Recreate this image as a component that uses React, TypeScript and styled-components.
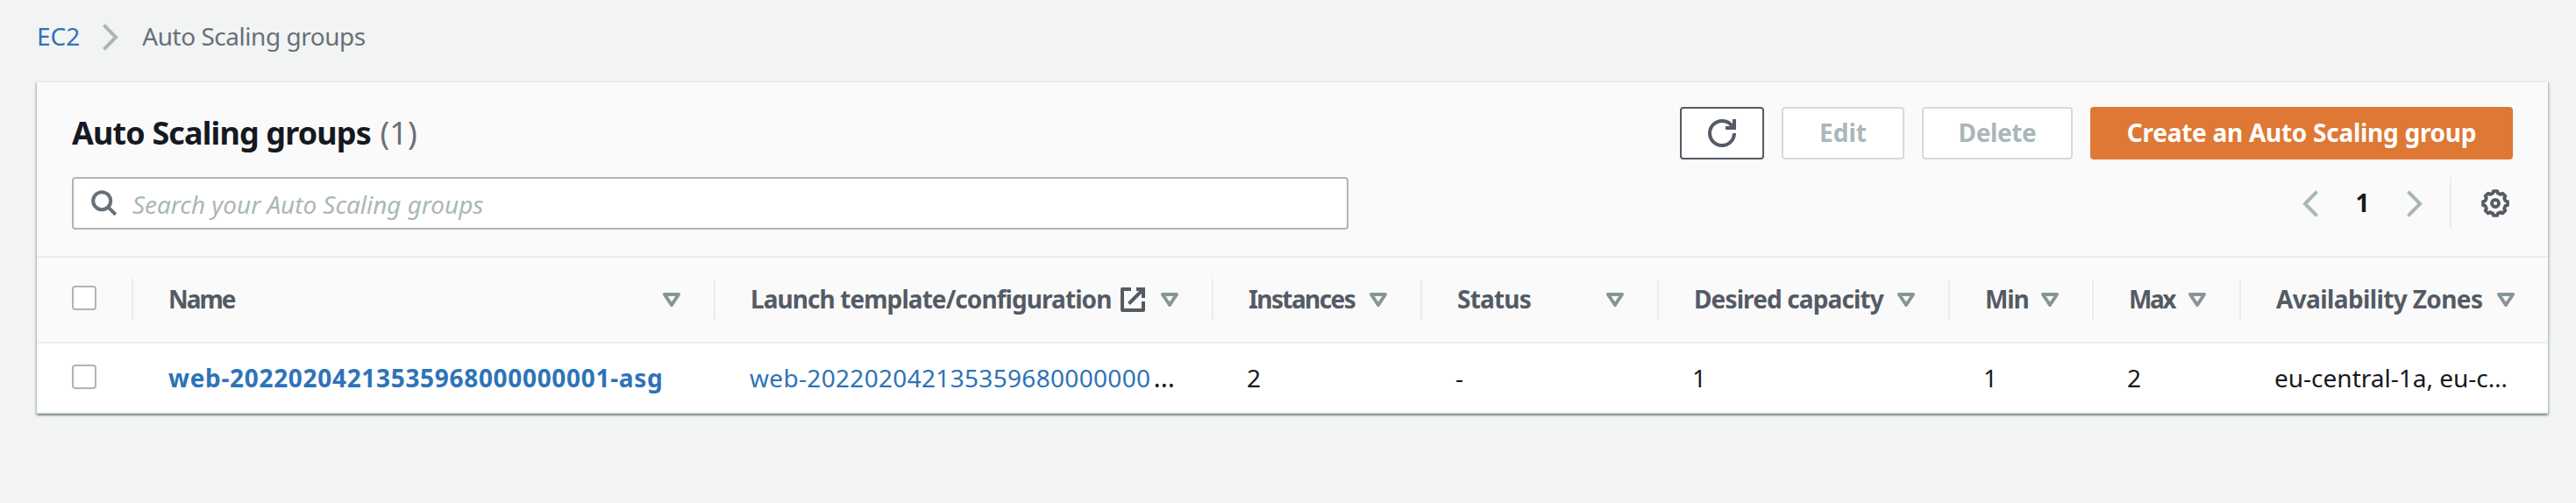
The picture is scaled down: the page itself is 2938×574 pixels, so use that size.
import React from 'react';
import styled, { createGlobalStyle } from 'styled-components';

const colors = {
  page: '#f2f4f4',
  surface: '#fafafa',
  line: '#eaeded',
  text: '#16191f',
  heading: '#545b64',
  muted: '#687078',
  control: '#aab7b8',
  disabledBorder: '#d5dbdb',
  sort: '#879596',
  link: '#2e73b8',
  primary: '#df7834',
};

const GlobalStyle = createGlobalStyle`
  *, *::before, *::after { box-sizing: border-box; }
  body {
    margin: 0;
    background: ${colors.page};
    color: ${colors.text};
    font-family: "Noto Sans", "Open Sans", sans-serif;
    font-size: 28px;
    line-height: 40px;
  }
  svg { display: block; flex: none; fill: none; stroke: currentColor; }
`;

const Page = styled.main`
  min-height: 574px;
  padding: 21px 32px 0 42px;
`;

const Breadcrumbs = styled.nav`
  display: flex;
  align-items: center;
  height: 40px;
  margin-bottom: 31px;
  color: ${colors.muted};
`;

const CrumbLink = styled.a`
  color: ${colors.link};
`;

const CrumbSeparator = styled.span`
  margin: 2px 27px 0 26px;
  color: ${colors.control};
`;

const Crumb = styled.span`
  letter-spacing: -0.47px;
`;

const Panel = styled.section`
  width: 2864px;
  border-top: 2px solid ${colors.line};
  background: #fff;
  box-shadow: 0 2px 2px 0 rgba(0, 28, 36, 0.3), 2px 2px 2px 0 rgba(0, 28, 36, 0.15),
    -2px 2px 2px 0 rgba(0, 28, 36, 0.15);
`;

const PanelHeader = styled.header`
  height: 200px;
  padding: 28px 40px 0;
  border-bottom: 2px solid ${colors.line};
  background: ${colors.surface};
`;

const Row = styled.div`
  display: flex;
  align-items: center;
  justify-content: space-between;
  height: 60px;
  margin-bottom: 20px;
`;

const Title = styled.h1`
  margin: 0;
  font-size: 36px;
  line-height: 50px;
  font-weight: 700;
  letter-spacing: -0.88px;
`;

const Counter = styled.span`
  margin-left: 2px;
  font-weight: 400;
  color: ${colors.muted};
  letter-spacing: 0.1px;
`;

const Actions = styled.div`
  display: flex;
  gap: 20px;
`;

type Variant = 'normal' | 'disabled' | 'primary';

const palette: Record<Variant, { border: string; text: string; fill: string }> = {
  normal: { border: colors.heading, text: colors.heading, fill: '#fff' },
  disabled: { border: colors.disabledBorder, text: colors.control, fill: '#fff' },
  primary: { border: colors.primary, text: '#fff', fill: colors.primary },
};

const Button = styled.button<{ $variant: Variant; $width: number; $tracking?: number }>`
  display: flex;
  align-items: center;
  justify-content: center;
  width: ${(p) => p.$width}px;
  height: 60px;
  padding: 0;
  border: 2px solid ${(p) => palette[p.$variant].border};
  border-radius: 4px;
  background: ${(p) => palette[p.$variant].fill};
  color: ${(p) => palette[p.$variant].text};
  font: inherit;
  font-weight: 700;
  letter-spacing: ${(p) => p.$tracking ?? 0}px;
`;

const ButtonLabel = styled.span`
  padding-bottom: 2px;
`;

const SearchBox = styled.div`
  display: flex;
  align-items: center;
  width: 1456px;
  height: 60px;
  padding-left: 20px;
  border: 2px solid ${colors.control};
  border-radius: 4px;
  background: #fff;
  color: ${colors.muted};
`;

const Placeholder = styled.span`
  margin: 2px 0 0 17px;
  font-style: italic;
  letter-spacing: -0.07px;
  color: ${colors.control};
`;

const Pagination = styled.div`
  display: flex;
  align-items: center;
  height: 60px;
  color: ${colors.control};
`;

const PageNumber = styled.span`
  width: 101px;
  padding-bottom: 2px;
  text-align: center;
  font-weight: 700;
  color: ${colors.text};
`;

const Preferences = styled.div`
  display: flex;
  align-items: center;
  height: 60px;
  margin-left: 31px;
  padding: 0 4px 0 34px;
  border-left: 2px solid ${colors.line};
  color: ${colors.heading};
`;

const TableRow = styled.div<{ $head?: boolean }>`
  display: grid;
  grid-template-columns: 110px 664px 568px 238px 270px 332px 164px 168px 350px;
  align-items: center;
  height: ${(p) => (p.$head ? 98 : 80)}px;
  border-bottom: 2px solid ${colors.line};
  background: ${(p) => (p.$head ? colors.surface : '#fff')};
`;

const HeadCell = styled.div`
  display: flex;
  align-items: center;
  justify-content: space-between;
  height: 48px;
  padding: 0 38px 0 40px;
  border-right: 2px solid ${colors.line};
  color: ${colors.heading};
  font-weight: 700;
  white-space: nowrap;

  &:last-child { border-right: 0; }
`;

const HeadLabel = styled.span<{ $tracking: number }>`
  padding-bottom: 2px;
  letter-spacing: ${(p) => p.$tracking}px;
`;

const HeadIcons = styled.span`
  display: flex;
  align-items: center;
  gap: 18px;
`;

const SelectCell = styled.div<{ $head?: boolean }>`
  display: flex;
  align-items: center;
  height: 48px;
  padding: 0 0 ${(p) => (p.$head ? 4 : 2)}px 40px;
  border-right: 2px solid ${(p) => (p.$head ? colors.line : 'transparent')};
`;

const Checkbox = styled.span`
  width: 28px;
  height: 28px;
  border: 2px solid ${colors.control};
  border-radius: 4px;
  background: #fff;
`;

const Cell = styled.div<{ $inset?: number; $tracking?: number }>`
  padding-left: ${(p) => p.$inset ?? 38}px;
  white-space: nowrap;
  letter-spacing: ${(p) => p.$tracking ?? 0}px;
`;

const GroupLink = styled.a`
  color: ${colors.link};
  font-weight: 700;
`;

const TemplateLink = styled.a`
  color: ${colors.link};
`;

const Ellipsis = styled.span`
  margin-left: 3px;
  letter-spacing: 0;
  font-size: 31px;
  line-height: 1;
`;

const Chevron = ({ left = false }: { left?: boolean }) => (
  <svg width="18" height="31" viewBox="0 0 18 31" strokeWidth="4">
    <path d={left ? 'M16.5 1.7L2.9 15.5l13.6 13.8' : 'M1.5 1.7l13.6 13.8L1.5 29.3'} />
  </svg>
);

const RefreshIcon = () => (
  <svg width="32" height="32" viewBox="0 0 16 16" strokeWidth="2">
    <path d="M10 5h5V0" />
    <path d="M15 8a7 7 0 1 1-7-7 6.9 6.9 0 0 1 6.3 4" />
  </svg>
);

const SearchIcon = () => (
  <svg width="30" height="30" viewBox="0 0 30 30" strokeWidth="4">
    <circle cx="12.2" cy="12.2" r="10" />
    <path d="M19.2 19.2l8.6 8.6" />
  </svg>
);

const ExternalIcon = () => (
  <svg width="28" height="28" viewBox="0 0 28 28" strokeWidth="4">
    <path strokeLinejoin="round" d="M12 2H2v24h24V16" />
    <path d="M18 2h8v10M9.5 18.5L26 2" />
  </svg>
);

const SortIcon = () => (
  <svg width="20" height="16" viewBox="0 0 20 16" strokeWidth="4" strokeLinejoin="round" color={colors.sort}>
    <path d="M2 2h16l-8 12z" />
  </svg>
);

const gearPath = Array.from({ length: 8 }, (_, i) => {
  const point = (degrees: number, radius: number) => {
    const angle = ((i * 45 + degrees) * Math.PI) / 180;
    return `${(8 + radius * Math.cos(angle)).toFixed(2)} ${(8 + radius * Math.sin(angle)).toFixed(2)}`;
  };
  return `${i ? 'L' : 'M'}${point(-9, 7.05)}L${point(9, 7.05)}L${point(14, 5.9)}L${point(31, 5.9)}`;
}).join('');

const GearIcon = () => (
  <svg width="32" height="32" viewBox="0 0 16 16" strokeWidth="1.9" strokeLinejoin="round">
    <path d={`${gearPath}Z`} />
    <circle cx="8" cy="8" r="2" />
  </svg>
);

const columns: { label: string; tracking: number; external?: boolean }[] = [
  { label: 'Name', tracking: -2 },
  { label: 'Launch template/configuration', tracking: -0.93, external: true },
  { label: 'Instances', tracking: -1.6 },
  { label: 'Status', tracking: -0.8 },
  { label: 'Desired capacity', tracking: -0.88 },
  { label: 'Min', tracking: -1.2 },
  { label: 'Max', tracking: -2.5 },
  { label: 'Availability Zones', tracking: -0.62 },
];

export default function App() {
  return (
    <>
      <GlobalStyle />
      <Page>
        <Breadcrumbs>
          <CrumbLink>EC2</CrumbLink>
          <CrumbSeparator><Chevron /></CrumbSeparator>
          <Crumb>Auto Scaling groups</Crumb>
        </Breadcrumbs>

        <Panel>
          <PanelHeader>
            <Row>
              <Title>Auto Scaling groups <Counter>(1)</Counter></Title>
              <Actions>
                <Button $variant="normal" $width={96} aria-label="Refresh"><RefreshIcon /></Button>
                <Button $variant="disabled" $width={140}><ButtonLabel>Edit</ButtonLabel></Button>
                <Button $variant="disabled" $width={172} $tracking={-0.38}><ButtonLabel>Delete</ButtonLabel></Button>
                <Button $variant="primary" $width={482} $tracking={-0.27}>
                  <ButtonLabel>Create an Auto Scaling group</ButtonLabel>
                </Button>
              </Actions>
            </Row>
            <Row>
              <SearchBox>
                <SearchIcon />
                <Placeholder>Search your Auto Scaling groups</Placeholder>
              </SearchBox>
              <Pagination>
                <Chevron left />
                <PageNumber>1</PageNumber>
                <Chevron />
                <Preferences><GearIcon /></Preferences>
              </Pagination>
            </Row>
          </PanelHeader>

          <TableRow $head>
            <SelectCell $head><Checkbox /></SelectCell>
            {columns.map((column) => (
              <HeadCell key={column.label}>
                <HeadLabel $tracking={column.tracking}>{column.label}</HeadLabel>
                <HeadIcons>
                  {column.external && <ExternalIcon />}
                  <SortIcon />
                </HeadIcons>
              </HeadCell>
            ))}
          </TableRow>
          <TableRow>
            <SelectCell><Checkbox /></SelectCell>
            <Cell $inset={40} $tracking={0.68}><GroupLink>web-20220204213535968000000001-asg</GroupLink></Cell>
            <Cell $inset={39} $tracking={0.32}>
              <TemplateLink>web-202202042135359680000000</TemplateLink><Ellipsis>…</Ellipsis>
            </Cell>
            <Cell>2</Cell>
            <Cell>-</Cell>
            <Cell>1</Cell>
            <Cell>1</Cell>
            <Cell>2</Cell>
            <Cell>eu-central-1a, eu-c…</Cell>
          </TableRow>
        </Panel>
      </Page>
    </>
  );
}
